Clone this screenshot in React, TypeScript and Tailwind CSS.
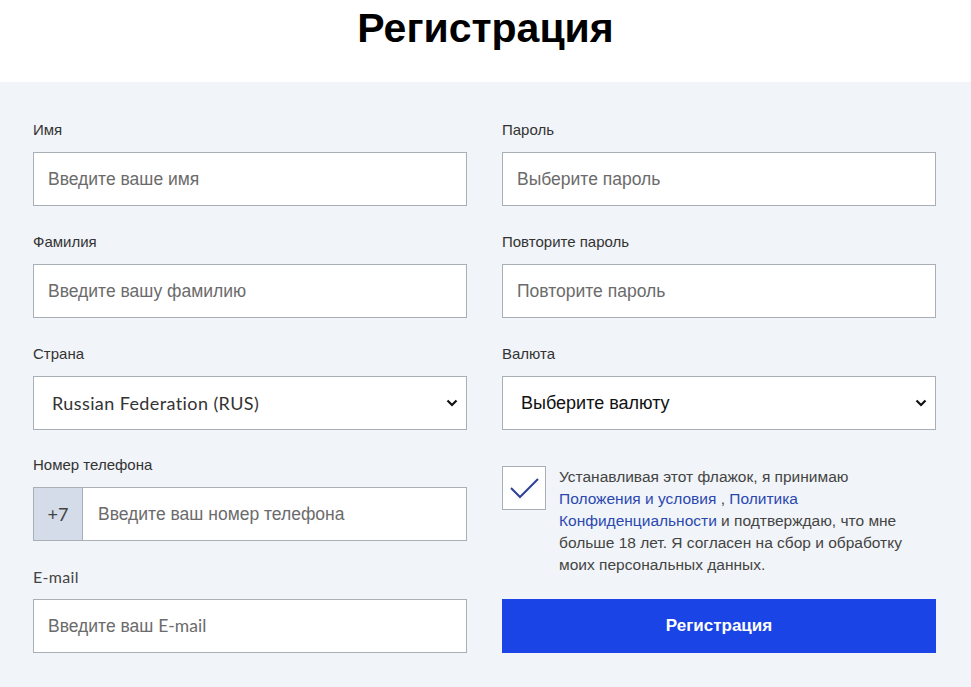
import React from 'react';

const sans = "font-['Liberation_Sans',Arial,sans-serif]";
const geo = "font-['Lato','Liberation_Sans',sans-serif]";

function Label({ children }: { children: React.ReactNode }) {
  return <div className="h-5 mb-3 text-[15px] leading-5 text-[#333]">{children}</div>;
}

function Field({ label, placeholder }: { label: React.ReactNode; placeholder: React.ReactNode }) {
  return (
    <div className="mb-[26px]">
      <Label>{label}</Label>
      <div className="h-[54px] bg-white border border-[#a8afb7] flex items-center px-[14px] text-[17.5px] text-[#6b6b6b]">
        {placeholder}
      </div>
    </div>
  );
}

function Chevron() {
  return (
    <svg width="12" height="8" viewBox="0 0 12 8" className="shrink-0">
      <polyline points="1.5,1.5 6,6 10.5,1.5" fill="none" stroke="#111" strokeWidth="2.2" />
    </svg>
  );
}

function Select({ label, value, latin }: { label: string; value: string; latin?: boolean }) {
  return (
    <div className={latin ? 'mb-[25px]' : 'mb-[26px]'}>
      <Label>{label}</Label>
      <div className="h-[54px] bg-white border border-[#a8afb7] flex items-center justify-between pl-[18px] pr-[8px] text-[18px] text-[#111]">
        <span className={latin ? `${geo} text-[#333] tracking-[0.4px]` : ''}>{value}</span>
        <Chevron />
      </div>
    </div>
  );
}

export default function App() {
  return (
    <div className={`${sans} w-[971px] h-[687px] overflow-hidden`}>
      <header className="h-[82px] bg-white flex justify-center">
        <h1 className="text-[41px] leading-[56px] font-bold text-black">Регистрация</h1>
      </header>

      <main className="bg-[#f1f4f8] h-[605px] pt-[38px] pl-[33px] pr-[35px] grid grid-cols-2 gap-x-[35px]">
        {/* левая колонка */}
        <div>
          <Field label="Имя" placeholder="Введите ваше имя" />
          <Field label="Фамилия" placeholder="Введите вашу фамилию" />
          <Select label="Страна" value="Russian Federation (RUS)" latin />
          <div className="mb-[26px]">
            <Label>Номер телефона</Label>
            <div className="h-[54px] bg-white border border-[#a8afb7] flex">
              <div className={`${geo} w-[49px] bg-[#d3dce8] border-r border-[#a8afb7] flex items-center justify-center text-[18px] text-[#444]`}>
                +7
              </div>
              <div className="flex items-center pl-[15px] text-[17.5px] text-[#6b6b6b]">Введите ваш номер телефона</div>
            </div>
          </div>
          <Field
            label={<span className={`${geo} text-[#444] text-[16px] tracking-[0.3px]`}>E-mail</span>}
            placeholder={
              <span>
                Введите ваш <span className={geo}>E-mail</span>
              </span>
            }
          />
        </div>

        {/* правая колонка */}
        <div>
          <Field label="Пароль" placeholder="Выберите пароль" />
          <Field label="Повторите пароль" placeholder="Повторите пароль" />
          <Select label="Валюта" value="Выберите валюту" />
          <div className="flex gap-[13px] mt-[36px]">
            <div className="w-[44px] h-[44px] shrink-0 bg-white border border-[#a8afb7]">
              <svg width="42" height="42" viewBox="0 0 42 42">
                <polyline points="8,21 17,30 35,12" fill="none" stroke="#2d3f96" strokeWidth="2" />
              </svg>
            </div>
            <p className="w-[352px] text-[15.5px] leading-[22px] text-[#444]">
              Устанавливая этот флажок, я принимаю <span className="text-[#2b48b0]">Положения и условия</span> ,{' '}
              <span className="text-[#2b48b0]">Политика Конфиденциальности</span> и подтверждаю, что мне больше 18 лет. Я согласен на сбор и обработку моих персональных данных.
            </p>
          </div>
          <button className="mt-[23px] w-full h-[54px] bg-[#1a44e6] text-white text-[17px] font-bold">
            Регистрация
          </button>
        </div>
      </main>
    </div>
  );
}
